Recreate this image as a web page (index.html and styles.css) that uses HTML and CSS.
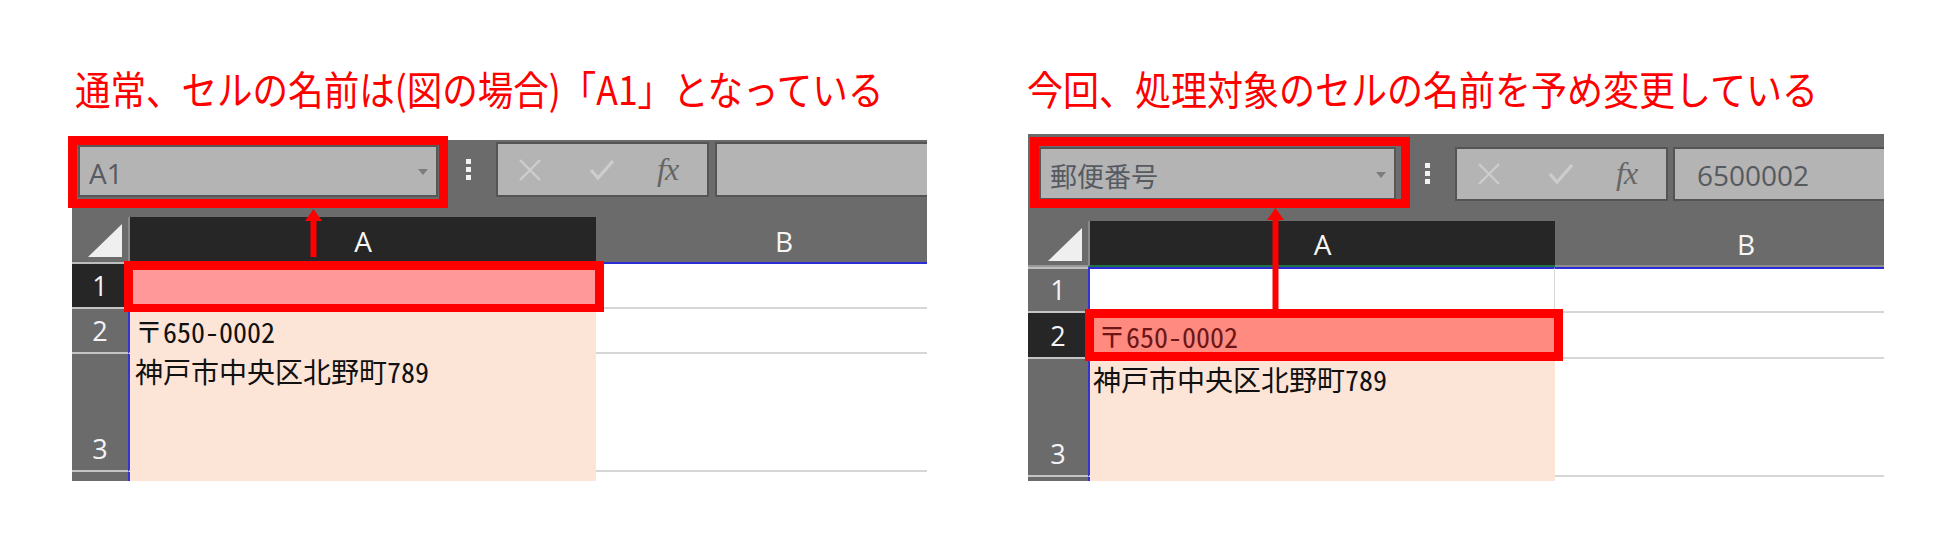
FILE: index.html
```html
<!DOCTYPE html>
<html lang="ja">
<head>
<meta charset="utf-8">
<title>セルの名前</title>
<link rel="stylesheet" href="styles.css">
</head>
<body>
<main class="page">
  <section class="example example--normal">
    <h2 class="caption"><span class="caption-text">通常、セルの名前は(図の場合)「A1」となっている</span></h2>
    <div class="excel">
      <div class="toolbar">
        <div class="namebox"><span class="namebox-value">A1</span><span class="caret"></span></div>
        <div class="grip"><i></i><i></i><i></i></div>
        <div class="fx-buttons">
          <svg class="ico ico-x" viewBox="0 0 24 24"><path d="M2 2 L22 22 M22 2 L2 22"/></svg>
          <svg class="ico ico-check" viewBox="0 0 26 24"><path d="M2 12 L9 20 L24 3"/></svg>
          <span class="fx">fx</span>
        </div>
        <div class="formula"></div>
      </div>
      <div class="sheet-clip">
        <div class="sheet">
          <div class="corner"><span class="corner-tri"></span></div>
          <div class="col-hdr is-active">A</div>
          <div class="col-hdr">B</div>

          <div class="row-hdr first is-active">1</div>
          <div class="cell cell-a first sel-pink"></div>
          <div class="cell cell-b first"></div>

          <div class="row-hdr">2</div>
          <div class="cell cell-a peach"><span class="txt">〒650-0002</span></div>
          <div class="cell cell-b"></div>

          <div class="row-hdr">3</div>
          <div class="cell cell-a peach top"><span class="txt">神戸市中央区北野町789</span></div>
          <div class="cell cell-b"></div>

          <div class="row-hdr last"></div>
          <div class="cell cell-a peach last"></div>
          <div class="cell cell-b last"></div>
        </div>
      </div>
      <div class="mark mark-name"></div>
      <div class="mark mark-cell"></div>
      <svg class="arrow" viewBox="0 0 19 48" preserveAspectRatio="none"><path d="M9.5 0 L18 12 L1 12 Z"/><rect x="6.5" y="11" width="6" height="37"/></svg>
    </div>
  </section>

  <section class="example example--renamed">
    <h2 class="caption"><span class="caption-text">今回、処理対象のセルの名前を予め変更している</span></h2>
    <div class="excel">
      <div class="toolbar">
        <div class="namebox"><span class="namebox-value">郵便番号</span><span class="caret"></span></div>
        <div class="grip"><i></i><i></i><i></i></div>
        <div class="fx-buttons">
          <svg class="ico ico-x" viewBox="0 0 24 24"><path d="M2 2 L22 22 M22 2 L2 22"/></svg>
          <svg class="ico ico-check" viewBox="0 0 26 24"><path d="M2 12 L9 20 L24 3"/></svg>
          <span class="fx">fx</span>
        </div>
        <div class="formula"><span class="formula-value">6500002</span></div>
      </div>
      <div class="sheet-clip">
        <div class="sheet">
          <div class="corner"><span class="corner-tri"></span></div>
          <div class="col-hdr is-active">A</div>
          <div class="col-hdr">B</div>

          <div class="row-hdr first">1</div>
          <div class="cell cell-a first white"></div>
          <div class="cell cell-b first"></div>

          <div class="row-hdr is-active">2</div>
          <div class="cell cell-a sel-salmon"><span class="txt">〒650-0002</span></div>
          <div class="cell cell-b"></div>

          <div class="row-hdr">3</div>
          <div class="cell cell-a peach top"><span class="txt">神戸市中央区北野町789</span></div>
          <div class="cell cell-b"></div>

          <div class="row-hdr last"></div>
          <div class="cell cell-a peach last"></div>
          <div class="cell cell-b last"></div>
        </div>
      </div>
      <div class="mark mark-name"></div>
      <div class="mark mark-cell"></div>
      <svg class="arrow" viewBox="0 0 19 101" preserveAspectRatio="none"><path d="M9.5 0 L18 12 L1 12 Z"/><rect x="6.5" y="11" width="6" height="90"/></svg>
    </div>
  </section>
</main>
</body>
</html>
```

FILE: styles.css
```css
* { box-sizing: border-box; }
html, body { margin: 0; padding: 0; background: #ffffff; }
body {
  width: 1941px;
  height: 537px;
  overflow: hidden;
  font-family: "Open Sans", "Noto Sans CJK JP", sans-serif;
}

.page {
  display: flex;
  gap: 101px;
  padding: 68px 0 0 72px;
}

.example {
  display: flex;
  flex-direction: column;
}
.example--normal {
  width: 855px;
  --title-ml: 3px;
  --title-sx: 0.888;
  --panel-mt: 32px;
  --tb-h: 77px;
  --nb-ml: 6px; --nb-mt: 5px; --nb-w: 360px; --nb-h: 52px;
  --grip-ml: 28px; --grip-mt: 19px;
  --btn-ml: 25px; --btn-mt: 2px; --btn-h: 55px;
  --fm-ml: 6px;
  --corner-w: 56px; --a-w: 468px; --b-w: 376px;
  --rows: 45px 47px 45px 118px 1fr;
  --tri-l: 16px; --tri-t: 7px;
  --hdr-border: 0px;
}
.example--renamed {
  width: 856px;
  --title-ml: -1px;
  --title-sx: 0.9;
  --panel-mt: 26px;
  --tb-h: 87px;
  --nb-ml: 11px; --nb-mt: 13px; --nb-w: 357px; --nb-h: 53px;
  --grip-ml: 29px; --grip-mt: 29px;
  --btn-ml: 25px; --btn-mt: 13px; --btn-h: 54px;
  --fm-ml: 5px;
  --corner-w: 60px; --a-w: 467px; --b-w: 382px;
  --rows: 46px 46px 46px 118px 1fr;
  --tri-l: 20px; --tri-t: 7px;
  --hdr-border: 2px;
}

/* Caption */
.caption {
  margin: 0 0 0 var(--title-ml);
  height: 40px;
  font: 400 40px/40px "Noto Sans CJK JP", sans-serif;
  color: #ff0000;
  white-space: nowrap;
}
.caption-text {
  display: inline-block;
  transform: scaleX(var(--title-sx));
  transform-origin: left center;
}

/* Excel panel */
.excel {
  position: relative;
  margin-top: var(--panel-mt);
  height: calc(481px - 68px - 40px - var(--panel-mt));
  background: #6b6b6b;
  display: flex;
  flex-direction: column;
}

.toolbar {
  height: var(--tb-h);
  flex: none;
  display: flex;
  align-items: flex-start;
}
.namebox {
  margin: var(--nb-mt) 0 0 var(--nb-ml);
  width: var(--nb-w);
  height: var(--nb-h);
  background: #b4b4b4;
  border: 2px solid #575757;
  display: flex;
  align-items: center;
  padding: 4px 8px 0 9px;
}
.namebox-value {
  flex: 1;
  font: 400 28px/1 "Open Sans", "Noto Sans CJK JP", sans-serif;
  color: #565b62;
}
.example--renamed .namebox-value { font-family: "Noto Sans CJK JP", sans-serif; font-size: 27px; }
.caret {
  width: 0; height: 0;
  border-left: 5px solid transparent;
  border-right: 5px solid transparent;
  border-top: 6px solid #7c7c7c;
  margin-bottom: 2px;
}
.grip {
  margin: var(--grip-mt) 0 0 var(--grip-ml);
  width: 5px;
  display: flex;
  flex-direction: column;
  gap: 3px;
}
.grip i {
  display: block;
  width: 5px; height: 5px;
  background: #f2f2f2;
}
.fx-buttons {
  margin: var(--btn-mt) 0 0 var(--btn-ml);
  width: 213px;
  height: var(--btn-h);
  background: #b4b4b4;
  border: 2px solid #545454;
  display: flex;
  align-items: center;
  padding-left: 20px;
}
.ico { display: block; fill: none; stroke: #cdcdcd; stroke-width: 2.4; }
.ico-x { width: 24px; height: 24px; }
.ico-check { width: 26px; height: 24px; margin-left: 47px; stroke-width: 3.2; }
.fx {
  margin-left: 42px;
  font: italic 400 32px/1 "Liberation Serif", serif;
  color: #666666;
  letter-spacing: -1px;
  padding-bottom: 2px;
}
.formula {
  margin: var(--btn-mt) 0 0 var(--fm-ml);
  flex: 1;
  height: var(--btn-h);
  background: #b4b4b4;
  border: 2px solid #545454;
  border-right: 0;
  display: flex;
  align-items: center;
  padding: 2px 0 0 22px;
}
.formula-value {
  font: 400 28px/1 "Open Sans", sans-serif;
  color: #555a61;
}

/* Sheet grid (B column runs past the visible edge) */
.sheet-clip {
  flex: 1;
  overflow: hidden;
  display: flex;
}
.sheet {
  flex: none;
  display: grid;
  grid-template-columns: var(--corner-w) var(--a-w) var(--b-w);
  grid-template-rows: var(--rows);
}
.corner {
  position: relative;
  background: #6b6b6b;
  border-bottom: var(--hdr-border) solid #9a9a9a;
}
.corner-tri {
  position: absolute;
  left: var(--tri-l);
  top: var(--tri-t);
  width: 34px;
  height: 33px;
  background: #efefef;
  clip-path: polygon(100% 0, 100% 100%, 0 100%);
}
.col-hdr {
  display: flex;
  align-items: center;
  justify-content: center;
  background: #6b6b6b;
  color: #f6f6f6;
  font: 400 28px/1 "Open Sans", sans-serif;
  padding-top: 2px;
  border-bottom: var(--hdr-border) solid #8d8d8d;
}
.col-hdr.is-active {
  background: #262626;
  border-left: 2px solid #8a8a8a;
  border-bottom-color: #1f7244;
}
.row-hdr {
  display: flex;
  align-items: flex-end;
  justify-content: center;
  background: #6b6b6b;
  color: #f2f4f8;
  font: 400 27px/1 "Open Sans", sans-serif;
  padding-bottom: 8px;
  border-bottom: 2px solid #c4c4c4;
}
.row-hdr.is-active { background: #262626; }
.row-hdr.first { border-top: 2px solid #bdbdbd; }
.row-hdr.last { border-bottom: 0; }

.cell {
  background: #ffffff;
  color: #111111;
  border-bottom: 2px solid #d6d6d6;
  display: flex;
  align-items: flex-end;
  padding: 0 0 7px 5px;
}
.cell.first { border-top: 2px solid #2b2bd8; }
.cell.last { border-bottom: 0; }
.cell-a { border-left: 2px solid #3434d0; }
.cell.top { align-items: flex-start; padding-top: 3px; }
.cell.peach { background: #fce4d6; border-bottom-color: #fce4d6; }
.cell.sel-pink { background: #ff9999; }
.cell.sel-salmon { background: #ff8a80; border-left-color: #1f7244; color: #6e1616; padding-left: 8px; }
.cell.white { border-right: 1px solid #d6d6d6; }
.example--renamed .cell.top { padding-top: 6px; padding-left: 3px; }

.txt {
  font: 400 28px/1 "Noto Sans CJK JP", sans-serif;
  font-feature-settings: "hwid";
  white-space: nowrap;
}

/* Overlays */
.mark {
  position: absolute;
  border: 9px solid #ff0000;
  pointer-events: none;
}
.example--normal .mark-name { left: -4px; top: -4px; width: 380px; height: 72px; }
.example--normal .mark-cell { left: 52px; top: 121px; width: 480px; height: 51px; border-bottom-width: 8px; }
.example--renamed .mark-name { left: 2px; top: 3px; width: 380px; height: 71px; }
.example--renamed .mark-cell { left: 57px; top: 175px; width: 478px; height: 52px; }

.arrow {
  position: absolute;
  width: 19px;
  fill: #ff0000;
}
.example--normal .arrow { left: 232px; top: 69px; height: 48px; }
.example--renamed .arrow { left: 238px; top: 74px; height: 101px; }
```
